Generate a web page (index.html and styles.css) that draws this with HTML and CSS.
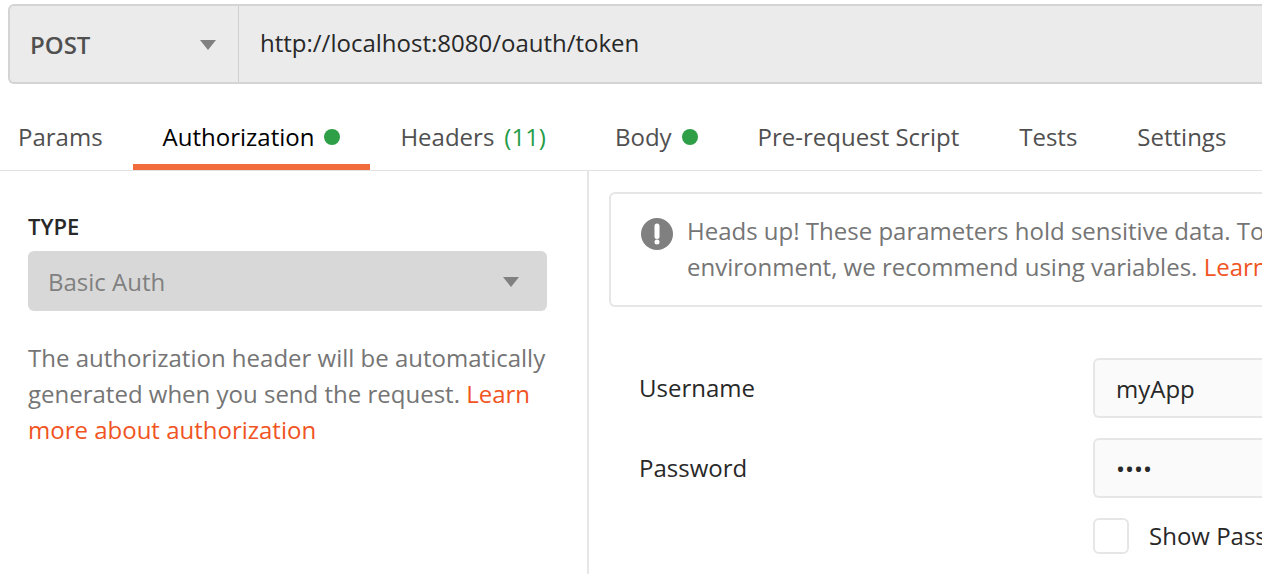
FILE: index.html
```html
<!DOCTYPE html>
<html lang="en">
<head>
<meta charset="utf-8">
<title>Request</title>
<link rel="stylesheet" href="styles.css">
</head>
<body>
<form class="request-bar">
  <div class="select-wrap method">
    <select class="method-select" aria-label="Method"><option>POST</option></select>
    <svg class="caret" viewBox="0 0 16 10" aria-hidden="true"><path d="M0 0h16L8 10z"/></svg>
  </div>
  <input class="url" type="text" aria-label="Request URL" value="http://localhost:8080/oauth/token">
</form>
<nav class="tabs">
  <button class="tab" type="button">Params</button>
  <button class="tab active" type="button">Authorization<span class="dot"></span></button>
  <button class="tab" type="button">Headers<span class="count">(11)</span></button>
  <button class="tab" type="button">Body<span class="dot"></span></button>
  <button class="tab" type="button">Pre-request Script</button>
  <button class="tab" type="button">Tests</button>
  <button class="tab" type="button">Settings</button>
</nav>
<main class="panes">
  <section class="type-pane">
    <label class="type-label" for="auth-type">TYPE</label>
    <div class="select-wrap">
      <select class="type-select" id="auth-type"><option>Basic Auth</option></select>
      <svg class="caret" viewBox="0 0 16 10" aria-hidden="true"><path d="M0 0h16L8 10z"/></svg>
    </div>
    <p class="help">The authorization header will be automatically generated when you send the request. <a class="link" href="#">Learn more about authorization</a></p>
  </section>
  <section class="auth-pane">
    <div class="notice">
      <svg class="notice-icon" viewBox="0 0 32 32" aria-hidden="true"><circle cx="16" cy="16" r="16" fill="#808080"/><rect x="13.500" y="5.500" width="5" height="15.500" rx="2.500" fill="#fff"/><circle cx="16" cy="24" r="2.500" fill="#fff"/></svg>
      <p class="notice-text">Heads up! These parameters hold sensitive data. To<br>environment, we recommend using variables. <a class="link" href="#">Learn more</a></p>
    </div>
    <form class="fields">
      <label for="username">Username</label>
      <input class="field" id="username" type="text" value="myApp">
      <label for="password">Password</label>
      <input class="field" id="password" type="password" value="pass">
      <label class="show"><input class="check" type="checkbox">Show Password</label>
    </form>
  </section>
</main>
</body>
</html>
```
FILE: styles.css
```css
* { box-sizing: border-box; }

body {
  margin: 0;
  min-height: 100vh;
  display: flex;
  flex-direction: column;
  overflow: hidden;
  background: #fff;
  color: #282828;
  font: 24px/36px "Open Sans", sans-serif;
}

button, input, select { font: inherit; color: inherit; }
p { margin: 0; }

.request-bar {
  display: flex;
  height: 80px;
  margin: 4px 0 0 8px;
  border: 2px solid #d4d4d4;
  border-right: 0;
  border-radius: 6px 0 0 6px;
  background: #ebebeb;
}

.select-wrap { position: relative; display: flex; }

.select-wrap select {
  width: 100%;
  appearance: none;
  border: 0;
  background: none;
}

.caret {
  position: absolute;
  top: 50%;
  right: 28px;
  width: 16px;
  height: 10px;
  margin-top: -4px;
  fill: #808080;
  pointer-events: none;
}

.method {
  width: 229px;
  border-right: 1px solid #d0d0d0;
}

.method .caret { right: 22px; }

.select-wrap .method-select {
  padding: 2px 20px 0;
  color: #505050;
  font-weight: 600;
}

.url {
  flex: 1;
  min-width: 0;
  padding: 0 21px 2px;
  border: 0;
  background: none;
}

.tabs {
  display: flex;
  height: 87px;
  padding-top: 20px;
  border-bottom: 1px solid #e2e2e2;
  margin-left: -12px;
}

.tab {
  display: flex;
  align-items: center;
  flex: none;
  padding: 6px 30px 0;
  border: 0;
  border-bottom: 6px solid transparent;
  background: none;
  color: #505050;
  white-space: nowrap;
}

.tab.active {
  border-bottom-color: #f26b3a;
  color: #000;
}

.dot {
  width: 16px;
  height: 16px;
  margin-left: 10px;
  border-radius: 50%;
  background: #2e9e47;
}

.count {
  margin: 0 9px 0 10px;
  color: #249c47;
}

.panes { flex: 1; display: flex; }

.type-pane {
  flex: none;
  width: 589px;
  padding: 39px 40px 0 28px;
  border-right: 2px solid #e6e6e6;
}

.type-label {
  display: block;
  margin-bottom: 9px;
  font-size: 22px;
  font-weight: 600;
  line-height: 32px;
}

.select-wrap .type-select {
  height: 60px;
  padding: 2px 20px 0;
  border-radius: 6px;
  background: #d8d8d8;
  color: #808080;
}

.help { margin-top: 29px; color: #757575; }
.link { color: #f05423; text-decoration: none; }

.auth-pane {
  flex: 1;
  min-width: 0;
  padding-top: 21px;
  white-space: nowrap;
}

.notice {
  display: flex;
  gap: 14px;
  margin-left: 20px;
  padding: 19px 0 20px 30px;
  height: 115px;
  border: 2px solid #e6e6e6;
  border-right: 0;
  border-radius: 6px 0 0 6px;
  color: #757575;
}

.notice-icon { flex: none; width: 32px; height: 32px; margin-top: 5px; }

.fields {
  display: grid;
  grid-template-columns: 454px 1fr;
  row-gap: 20px;
  align-items: center;
  margin: 51px 0 0 50px;
}

.field {
  width: 100%;
  min-width: 0;
  height: 60px;
  padding: 0 21px;
  border: 2px solid #e6e6e6;
  border-right: 0;
  border-radius: 6px 0 0 6px;
  background: #fafafa;
}

.show {
  grid-column: 2;
  display: flex;
  align-items: center;
  gap: 20px;
  min-width: 0;
}

.check {
  flex: none;
  appearance: none;
  width: 36px;
  height: 36px;
  margin: 0;
  border: 2px solid #e6e6e6;
  border-radius: 6px;
  background: #fff;
}
```
